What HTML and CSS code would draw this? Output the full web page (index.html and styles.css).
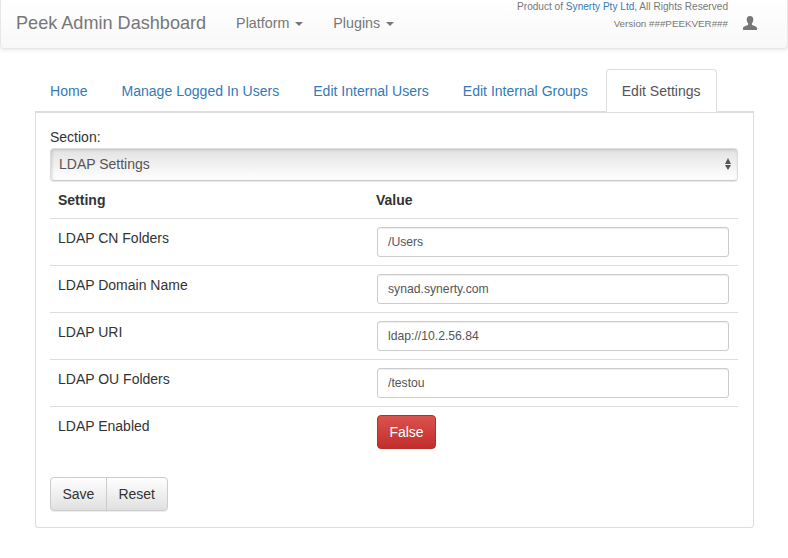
FILE: index.html
```html
<!DOCTYPE html>
<html lang="en">
<head>
    <meta charset="UTF-8">
    <meta name="viewport" content="width=device-width, initial-scale=1.0">
    <title>Peek Admin Dashboard</title>
    <link rel="stylesheet" href="styles.css">
</head>
<body>
    <nav class="navbar">
        <a class="brand" href="#">Peek Admin Dashboard</a>
        <a class="nav-link nav-platform" href="#">Platform <span class="caret"></span></a>
        <a class="nav-link" href="#">Plugins <span class="caret"></span></a>
        <div class="nav-info">
            <div>Product of <a href="#">Synerty Pty Ltd,</a> All Rights Reserved</div>
            <div class="version">Version ###PEEKVER###</div>
        </div>
        <svg class="user-icon" viewBox="0 0 14 15" width="14" height="14" preserveAspectRatio="none" aria-hidden="true">
            <path d="M7 0C4.8 0 3.7 1.6 3.7 3.8c0 1.5.5 3 1.3 4 .3.4.3 1.2 0 1.6-.5.7-1.8 1-3.2 1.6C.6 11.5 0 12.2 0 13.3V15h14v-1.7c0-1.1-.6-1.8-1.8-2.3-1.4-.6-2.7-.9-3.2-1.6-.3-.4-.3-1.2 0-1.6.8-1 1.3-2.5 1.3-4C10.300 1.6 9.200 0 7 0z" fill="#777"/>
        </svg>
    </nav>

    <div class="content">
        <ul class="tabs">
            <li><a href="#">Home</a></li>
            <li><a href="#">Manage Logged In Users</a></li>
            <li><a href="#">Edit Internal Users</a></li>
            <li><a href="#">Edit Internal Groups</a></li>
            <li class="active"><a href="#">Edit Settings</a></li>
        </ul>

        <div class="panel">
            <label class="section-label" for="section">Section:</label>
            <div class="select-wrap">
                <select id="section">
                    <option>LDAP Settings</option>
                </select>
            </div>

            <table class="settings">
                <thead>
                    <tr><th class="col-setting">Setting</th><th class="col-value">Value</th></tr>
                </thead>
                <tbody>
                    <tr>
                        <td>LDAP CN Folders</td>
                        <td><input type="text" value="/Users"></td>
                    </tr>
                    <tr>
                        <td>LDAP Domain Name</td>
                        <td><input type="text" value="synad.synerty.com"></td>
                    </tr>
                    <tr>
                        <td>LDAP URI</td>
                        <td><input type="text" value="ldap://10.2.56.84"></td>
                    </tr>
                    <tr>
                        <td>LDAP OU Folders</td>
                        <td><input type="text" value="/testou"></td>
                    </tr>
                    <tr>
                        <td>LDAP Enabled</td>
                        <td><button class="btn-danger">False</button></td>
                    </tr>
                </tbody>
            </table>

            <div class="btn-group">
                <button>Save</button>
                <button>Reset</button>
            </div>
        </div>
    </div>
</body>
</html>
```

FILE: styles.css
```css
* {
    box-sizing: border-box;
}

body {
    margin: 0;
    font-family: "Liberation Sans", Arial, sans-serif;
    font-size: 14px;
    line-height: 22px;
    color: #333;
    background: #fff;
}

a {
    text-decoration: none;
    color: #337ab7;
}

.navbar {
    display: flex;
    align-items: center;
    height: 49px;
    padding: 0 30px 2px 15px;
    background: linear-gradient(to bottom, #fff, #f8f8f8);
    border: 1px solid #e7e7e7;
    border-top: none;
    border-radius: 0 0 4px 4px;
    box-shadow: 0 1px 4px rgba(0, 0, 0, .1);
}

.brand {
    font-size: 18.1px;
    color: #777;
    margin-right: 30px;
}

.nav-link {
    font-size: 14.3px;
    color: #777;
    margin-right: 30px;
    white-space: nowrap;
}

.caret {
    display: inline-block;
    margin-left: 2px;
    vertical-align: middle;
    border-top: 4px solid #777;
    border-left: 4.500px solid transparent;
    border-right: 4.500px solid transparent;
}

.nav-info {
    align-self: flex-start;
    margin-left: auto;
    margin-top: -2px;
    text-align: right;
    font-size: 10.1px;
    line-height: 17px;
    color: #777;
}

.version {
    font-size: 9.8px;
}

.user-icon {
    margin-left: 15px;
    margin-top: -1px;
}

.content {
    padding: 20px 34px 0 35px;
}

.tabs {
    display: flex;
    list-style: none;
    margin: 0 0 0 -1px;
    padding: 0;
    position: relative;
    z-index: 1;
    font-size: 14.05px;
    white-space: nowrap;
}

.tabs li {
    margin-right: 2px;
}

.tabs a {
    display: block;
    height: 43px;
    padding: 10px 15px;
    border: 1px solid transparent;
    border-radius: 4px 4px 0 0;
}

.tabs .active a {
    color: #555;
    background: #fff;
    border-color: #ddd #ddd #fff;
}

.panel {
    margin-top: -1px;
    height: 417px;
    padding: 13px 15px 13px 14px;
    border: 1px solid #ddd;
    border-top-width: 2px;
    border-radius: 0 0 4px 4px;
    box-shadow: 0 1px 1px rgba(0, 0, 0, .05);
}

.section-label {
    display: block;
    height: 22px;
}

.select-wrap {
    position: relative;
    height: 33px;
}

.select-wrap::before,
.select-wrap::after {
    content: "";
    position: absolute;
    right: 7px;
    border-left: 3.500px solid transparent;
    border-right: 3.500px solid transparent;
    pointer-events: none;
}

.select-wrap::before {
    top: 10px;
    border-bottom: 6px solid #555;
}

.select-wrap::after {
    top: 17px;
    border-top: 5px solid #555;
}

select {
    appearance: none;
    display: block;
    width: 100%;
    height: 33px;
    padding: 0 8px 2px;
    font: inherit;
    color: #555;
    background: linear-gradient(to bottom, #e2e2e2, #fff);
    border: 1px solid #ddd;
    border-bottom-color: #ccc;
    border-radius: 4px;
    box-shadow: inset 1px 1px 3px rgba(0, 0, 0, .15), 0 1px 1px rgba(0, 0, 0, .1);
}

.settings {
    width: 100%;
    border-collapse: collapse;
}

.settings th {
    height: 37px;
    padding: 2px 8px 0;
    text-align: left;
    font-weight: bold;
    border-bottom: 1px solid #ddd;
}

.settings .col-value {
    padding-left: 7px;
}

.col-setting {
    width: 319px;
}

.settings td {
    height: 47px;
    padding: 8px;
    vertical-align: top;
    border-top: 1px solid #ddd;
}

.settings input {
    display: block;
    width: 352px;
    height: 30px;
    padding: 0 10px;
    font: 12.2px "Liberation Sans", Arial, sans-serif;
    color: #555;
    border: 1px solid #ccc;
    border-radius: 3px;
    box-shadow: inset 0 1px 1px rgba(0, 0, 0, .075);
}

button {
    font: inherit;
    cursor: pointer;
}

.btn-danger {
    display: block;
    width: 59px;
    height: 34px;
    padding: 0;
    color: #fff;
    background: linear-gradient(to bottom, #d9534f, #c12e2a);
    border: 1px solid #b92c28;
    border-radius: 4px;
}

.btn-group {
    display: flex;
    margin-top: 20px;
}

.btn-group button {
    height: 34px;
    padding: 0 11.500px;
    color: #333;
    background: linear-gradient(to bottom, #fff, #e0e0e0);
    border: 1px solid #ccc;
    box-shadow: 0 1px 1px rgba(0, 0, 0, .075);
}

.btn-group button:first-child {
    border-radius: 4px 0 0 4px;
}

.btn-group button:last-child {
    margin-left: -1px;
    border-radius: 0 4px 4px 0;
}
```
